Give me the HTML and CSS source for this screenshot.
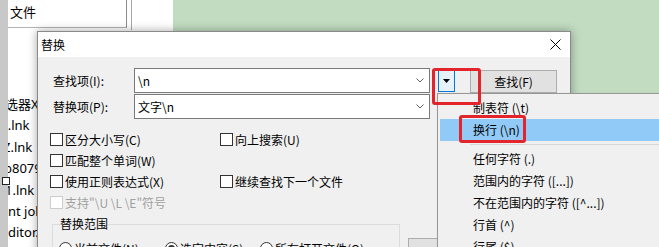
FILE: index.html
```html
<!DOCTYPE html>
<html lang="zh-CN">
<head>
    <meta charset="UTF-8">
    <title>替换</title>
    <link rel="stylesheet" href="styles.css">
</head>
<body>
    <div class="screen">
        <!-- background: explorer window -->
        <div class="strip"><span class="strip-box"></span></div>
        <div class="explorer">
            <div class="explorer-head">
                <div class="tab">文件</div>
                <div class="tab-edge"></div>
            </div>
            <ul class="files">
                <li class="cut-16">筛选器X.lnk</li>
                <li class="cut-5">t.lnk</li>
                <li class="cut-5">Z.lnk</li>
                <li class="cut-4">b8079.lnk</li>
                <li class="cut-3">1.lnk</li>
                <li>nt job.lnk</li>
                <li>ditor.lnk</li>
            </ul>
        </div>
        <div class="green"></div>

        <!-- replace dialog -->
        <div class="dialog">
            <div class="titlebar">
                <span>替换</span>
                <svg class="close" width="11" height="11" viewBox="0 0 11 11">
                    <path d="M0.5 0.5 L10.5 10.5 M10.5 0.5 L0.5 10.5" stroke="#000" stroke-width="1" fill="none"/>
                </svg>
            </div>
            <div class="dialog-body">
                <div class="field-row">
                    <label class="field-label">查找项(I):</label>
                    <div class="combo">
                        <span>\n</span>
                        <svg class="chev" width="8" height="5" viewBox="0 0 8 5"><path d="M0.5 0.5 L4 4 L7.5 0.5" stroke="#606060" fill="none"/></svg>
                    </div>
                    <div class="arrow-btn">
                        <svg width="7" height="4" viewBox="0 0 7 4"><path d="M0 0 H7 L3.5 4 Z" fill="#000"/></svg>
                    </div>
                    <div class="btn find-btn">查找(F)</div>
                </div>
                <div class="field-row second">
                    <label class="field-label">替换项(P):</label>
                    <div class="combo">
                        <span>文字\n</span>
                        <svg class="chev" width="8" height="5" viewBox="0 0 8 5"><path d="M0.5 0.5 L4 4 L7.5 0.5" stroke="#606060" fill="none"/></svg>
                    </div>
                </div>

                <div class="options">
                    <div class="check"><span class="box"></span>区分大小写(C)</div>
                    <div class="check"><span class="box"></span>向上搜索(U)</div>
                    <div class="check"><span class="box"></span>匹配整个单词(W)</div>
                    <div></div>
                    <div class="check"><span class="box"></span>使用正则表达式(X)</div>
                    <div class="check"><span class="box"></span>继续查找下一个文件</div>
                    <div class="check disabled"><span class="box"></span>支持"\U \L \E"符号</div>
                </div>

                <div class="bottom-row">
                    <fieldset class="scope">
                        <legend>替换范围</legend>
                        <div class="radios">
                            <div class="radio r1"><span class="dot"></span>当前文件(N)</div>
                            <div class="radio r2"><span class="dot on"></span>选定内容(S)</div>
                            <div class="radio"><span class="dot"></span>所有打开文件(O)</div>
                        </div>
                    </fieldset>
                    <div class="btn side-btn"></div>
                </div>
            </div>
        </div>

        <!-- special characters menu -->
        <ul class="menu">
            <li>制表符 (\t)</li>
            <li class="active">换行 (\n)</li>
            <li class="sep"></li>
            <li>任何字符 (.)</li>
            <li>范围内的字符 ([...])</li>
            <li>不在范围内的字符 ([^...])</li>
            <li>行首 (^)</li>
            <li>行尾 ($)</li>
        </ul>

        <!-- red highlight marks -->
        <div class="mark mark-btn"></div>
        <div class="mark mark-item"></div>
    </div>
</body>
</html>
```

FILE: styles.css
```css
body {
    margin: 0;
    background: #fff;
    font-family: "Noto Sans CJK SC", sans-serif;
    font-size: 12px;
    color: #000;
}
.screen {
    position: relative;
    width: 659px;
    height: 247px;
    overflow: hidden;
    background: #fff;
}
.strip {
    position: absolute;
    left: 0;
    top: 0;
    width: 8px;
    height: 247px;
    background: #c8c8c8;
    z-index: 1;
}
.strip-box {
    position: absolute;
    left: 2px;
    top: 177px;
    width: 6px;
    height: 6px;
    border: 1px solid #222;
    background: #fff;
}
.explorer {
    position: absolute;
    left: 8px;
    top: 0;
    width: 165px;
    height: 247px;
    overflow: hidden;
    font-family: "Noto Sans", "Noto Sans CJK SC", sans-serif;
    font-size: 13px;
}
.explorer-head {
    display: flex;
    height: 31px;
}
.tab {
    width: 119px;
    height: 28px;
    border-right: 1px solid #8c8c8c;
    border-bottom: 1px solid #b4b4b4;
    line-height: 24px;
    padding-left: 2px;
    box-sizing: border-box;
    font-family: "Noto Sans CJK SC", sans-serif;
}
.tab-edge {
    width: 4px;
    height: 30px;
    border-right: 1px solid #a8a8a8;
}
.files {
    list-style: none;
    margin: 0;
    padding: 63px 0 0;
}
.files li {
    height: 21.4px;
    line-height: 21.4px;
    white-space: nowrap;
}
.cut-3 { text-indent: -3px; }
.cut-4 { text-indent: -4px; }
.cut-5 { text-indent: -5px; }
.cut-16 { text-indent: -16px; }
.green {
    position: absolute;
    left: 173px;
    top: 0;
    right: 0;
    height: 130px;
    background: #c1dcc1;
}

/* dialog */
.dialog {
    position: absolute;
    left: 37px;
    top: 31px;
    width: 534px;
    height: 250px;
    box-sizing: border-box;
    border: 1px solid #8a8a8a;
    background: #f0f0f0;
    box-shadow: 0 0 9px rgba(0,0,0,0.35);
    z-index: 2;
}
.titlebar {
    height: 25px;
    background: #fff;
    display: flex;
    align-items: center;
    justify-content: space-between;
    padding: 0 9px 0 3px;
}
.dialog-body {
    padding: 11px 0 0 12px;
}
.field-row {
    display: flex;
    align-items: flex-start;
    height: 25px;
    margin-left: 3px;
}
.field-row.second {
    margin-top: 1px;
}
.field-label {
    width: 81px;
    line-height: 25px;
}
.combo {
    width: 296px;
    height: 25px;
    box-sizing: border-box;
    border: 1px solid #7a7a7a;
    background: #fff;
    display: flex;
    align-items: center;
    justify-content: space-between;
    padding: 0 5px 0 3px;
}
.arrow-btn {
    margin: 2px 0 0 8px;
    width: 17px;
    height: 22px;
    box-sizing: border-box;
    border: 1px solid #0078d7;
    background: #e5f1fb;
    display: flex;
    align-items: center;
    justify-content: center;
}
.btn {
    box-sizing: border-box;
    border: 1px solid #adadad;
    background: #e1e1e1;
    text-align: center;
}
.find-btn {
    margin: 2px 0 0 15px;
    width: 87px;
    height: 23px;
    line-height: 21px;
}
.options {
    display: grid;
    grid-template-columns: 170px 200px;
    row-gap: 8px;
    margin-top: 14px;
}
.check {
    display: flex;
    align-items: center;
    height: 13px;
    white-space: nowrap;
}
.box {
    width: 13px;
    height: 13px;
    box-sizing: border-box;
    border: 1px solid #333;
    background: #fff;
    margin-right: 2px;
}
.check.disabled { color: #a0a0a0; }
.check.disabled .box { border-color: #cccccc; }
.bottom-row {
    display: flex;
    align-items: flex-start;
    margin-top: 7px;
}
.scope {
    margin: 0 0 0 2px;
    width: 348px;
    box-sizing: border-box;
    padding: 0 7px 12px;
    border: 1px solid #dcdcdc;
}
.scope legend {
    padding: 0;
    line-height: 16px;
}
.radios {
    display: flex;
    padding-top: 10px;
    margin-left: -1px;
}
.radio {
    display: flex;
    align-items: center;
    height: 13px;
    white-space: nowrap;
}
.r1 { width: 106px; }
.r2 { width: 95px; }
.dot {
    width: 13px;
    height: 13px;
    box-sizing: border-box;
    border: 1px solid #333;
    border-radius: 50%;
    background: #fff;
    margin-right: 2px;
    display: flex;
    align-items: center;
    justify-content: center;
}
.dot.on::after {
    content: "";
    width: 7px;
    height: 7px;
    border-radius: 50%;
    background: #333;
}
.side-btn {
    margin: 22px 0 0 8px;
    width: 87px;
    height: 23px;
}

/* menu */
.menu {
    position: absolute;
    left: 437px;
    top: 93px;
    width: 240px;
    margin: 0;
    padding: 3px 2px;
    list-style: none;
    background: #f0f0f0;
    border: 1px solid #979797;
    box-shadow: 2px 2px 3px rgba(0,0,0,0.3);
    z-index: 3;
}
.menu li {
    height: 22px;
    line-height: 22px;
    padding-left: 33px;
    white-space: nowrap;
}
.menu li.active {
    background: #91c9f7;
}
.menu li.sep {
    height: 7px;
    padding: 0;
    margin-left: 30px;
    background: linear-gradient(#f0f0f0 3px, #d7d7d7 3px, #d7d7d7 4px, #f0f0f0 4px);
}

/* red marks */
.mark {
    position: absolute;
    box-sizing: border-box;
    border: 3px solid #e3242b;
    border-radius: 3px;
    z-index: 4;
}
.mark-btn {
    left: 432px;
    top: 68px;
    width: 49px;
    height: 37px;
}
.mark-item {
    left: 459px;
    top: 115px;
    width: 67px;
    height: 28px;
}
```
